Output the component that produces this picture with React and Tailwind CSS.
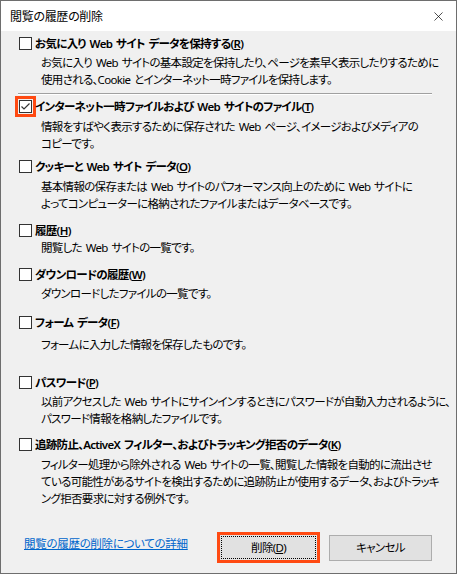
import { X } from "lucide-react";

const items = [
  {
    label: "お気に入り Web サイト データを保持する",
    key: "R",
    lines: [
      "お気に入り Web サイトの基本設定を保持したり、ページを素早く表示したりするために",
      "使用される、Cookie とインターネット一時ファイルを保持します。",
    ],
    mt: "mt-[4px]",
    dmt: "mt-[2px]",
  },
  {
    label: "インターネット一時ファイルおよび Web サイトのファイル",
    key: "T",
    checked: true,
    lines: [
      "情報をすばやく表示するために保存された Web ページ、イメージおよびメディアの",
      "コピーです。",
    ],
    mt: "mt-[3px]",
    dmt: "mt-[3px]",
  },
  {
    label: "クッキーと Web サイト データ",
    key: "O",
    lines: [
      "基本情報の保存または Web サイトのパフォーマンス向上のために Web サイトに",
      "よってコンピューターに格納されたファイルまたはデータベースです。",
    ],
    mt: "mt-[6px]",
    dmt: "mt-[3px]",
  },
  {
    label: "履歴",
    key: "H",
    lines: ["閲覧した Web サイトの一覧です。"],
    mt: "mt-[10px]",
    dmt: "mt-[0px]",
  },
  {
    label: "ダウンロードの履歴",
    key: "W",
    lines: ["ダウンロードしたファイルの一覧です。"],
    mt: "mt-[10px]",
    dmt: "mt-[2px]",
  },
  {
    label: "フォーム データ",
    key: "F",
    lines: ["フォームに入力した情報を保存したものです。"],
    mt: "mt-[12px]",
    dmt: "mt-[5px]",
  },
  {
    label: "パスワード",
    key: "P",
    lines: [
      "以前アクセスした Web サイトにサインインするときにパスワードが自動入力されるように、",
      "パスワード情報を格納したファイルです。",
    ],
    mt: "mt-[21px]",
    dmt: "mt-[2px]",
  },
  {
    label: "追跡防止、ActiveX フィルター、およびトラッキング拒否のデータ",
    key: "K",
    lines: [
      "フィルター処理から除外される Web サイトの一覧、閲覧した情報を自動的に流出させ",
      "ている可能性があるサイトを検出するために追跡防止が使用するデータ、およびトラッキ",
      "ング拒否要求に対する例外です。",
    ],
    mt: "mt-[9px]",
    dmt: "mt-[3px]",
  },
];

function CheckBox({ checked }) {
  return (
    <span
      className={
        "w-[13px] h-[13px] shrink-0 border border-[#333333] bg-white flex items-center justify-center" +
        (checked ? " outline-[3px] outline-solid outline-[#ff4a12] outline-offset-[1px]" : "")
      }
    >
      {checked && (
        <svg width="11" height="11" viewBox="0 0 11 11">
          <path d="M1.5 5.5 L4 8 L9.5 2.5" fill="none" stroke="#333333" strokeWidth="1.2" />
        </svg>
      )}
    </span>
  );
}

export default function App() {
  return (
    <div className="w-[457px] h-[574px] border border-[#6e6e6e] bg-[#f0f0f0] flex flex-col font-['Noto_Sans','Noto_Sans_CJK_JP',sans-serif] text-[11.5px] tracking-[-0.7px] [word-spacing:1.5px] text-black [font-feature-settings:'palt'] overflow-hidden">
      {/* Title bar */}
      <div className="h-[30px] bg-white flex items-center justify-between pl-[9px] pr-[10px] shrink-0">
        <span className="leading-[17px] text-[12px] tracking-[-0.3px]">閲覧の履歴の削除</span>
        <X size={15} strokeWidth={1.1} className="text-black" />
      </div>

      {/* Options */}
      <div className="flex flex-col pl-[18px]">
        {items.map((it, i) => (
          <div key={it.key}>
            <div className={it.mt + " flex items-center gap-[3px] h-[17px]"}>
              <CheckBox checked={it.checked} />
              <span className="whitespace-nowrap font-semibold leading-[17px]">
                {it.label}(<span className="underline">{it.key}</span>)
              </span>
            </div>
            <div className={it.dmt + " pl-[22px] leading-[17px] whitespace-nowrap"}>
              {it.lines.map((l) => (
                <div key={l}>{l}</div>
              ))}
            </div>
            {i === 0 && (
              <div className="mt-[5px] ml-[-1px] w-[414px] border-t border-[#a0a0a0] border-b border-b-white" />
            )}
          </div>
        ))}
      </div>

      {/* Footer */}
      <div className="mt-auto mb-[10px] h-[31px] flex items-center pl-[23px] pr-[24px]">
        <a href="#" className="mb-[9px] text-[#0066cc] underline leading-[17px] tracking-[-0.3px]">
          閲覧の履歴の削除についての詳細
        </a>
        <div className="ml-auto flex items-center gap-[9px]">
          <div className="w-[103px] h-[31px] border-[3px] border-[#ff4a12] bg-[#e1e1e1] p-[1px]">
            <div className="w-full h-full border border-dotted border-black flex items-center justify-center">
              削除(<span className="underline">D</span>)
            </div>
          </div>
          <div className="w-[103px] h-[26px] border border-[#adadad] bg-[#e1e1e1] flex items-center justify-center">
            キャンセル
          </div>
        </div>
      </div>
    </div>
  );
}
